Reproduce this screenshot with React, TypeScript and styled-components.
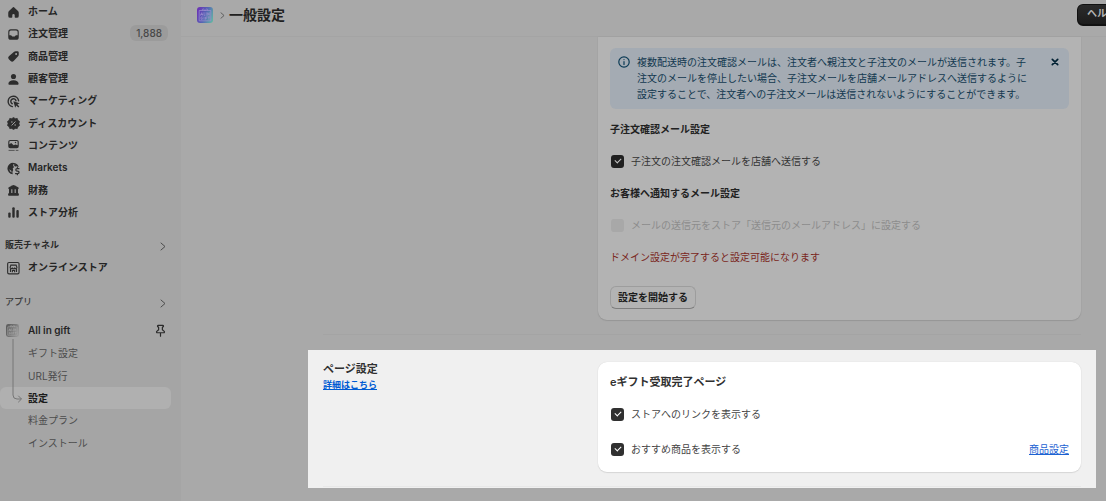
import React from "react";
import styled, { createGlobalStyle, css } from "styled-components";

const GlobalStyle = createGlobalStyle`
  *, *::before, *::after { box-sizing: border-box; }
  body {
    margin: 0;
    background: #a9a9a9;
    color: #212121;
    font-family: Inter, "Noto Sans CJK JP", sans-serif;
    font-size: 10px;
    line-height: 16px;
    overflow-x: clip;
  }
  h1, h2, h3, p, ul { margin: 0; padding: 0; }
  ul { list-style: none; }
  button { font: inherit; cursor: pointer; }
`;

const Shell = styled.div`
  display: flex;
  min-height: 100vh;
`;

/* ---------- Sidebar ---------- */

const Sidebar = styled.nav`
  flex: 0 0 181px;
  background: #a5a5a5;
`;

const NavList = styled.ul<{ $height: number }>`
  position: relative;
  display: grid;
  grid-auto-rows: 1fr;
  height: ${(p) => p.$height}px;
`;

const NavLink = styled.a<{ $sub?: boolean; $active?: boolean }>`
  display: flex;
  align-items: center;
  gap: 7px;
  height: 100%;
  margin-right: 10px;
  padding: 0 3px 0 ${(p) => (p.$sub ? 28 : 6)}px;
  border-radius: 6px;
  color: #252525;
  font-weight: 600;
  text-decoration: none;
  white-space: nowrap;
  ${(p) =>
    p.$sub &&
    css`
      color: #4c4c4c;
      font-weight: 400;
    `}
  ${(p) =>
    p.$active &&
    css`
      background: #b0b0b0;
      color: #1b1b1b;
      font-weight: 700;
    `}
`;

const NavIcon = styled.svg`
  flex: none;
  width: 15px;
  height: 15px;
  margin-top: 2px;
`;

const AppIcon = styled.span`
  display: flex;
  width: 15px;
`;

const Count = styled.span`
  margin-left: auto;
  padding: 0 6px;
  border-radius: 6px;
  background: #9b9b9b;
  color: #484848;
  font-weight: 500;
`;

const NavHeading = styled.button<{ $strong?: boolean }>`
  display: flex;
  align-items: center;
  justify-content: space-between;
  width: 100%;
  height: 22px;
  margin-top: ${(p) => (p.$strong ? 11 : 13)}px;
  padding: 0 15px 0 5px;
  border: 0;
  background: none;
  color: ${(p) => (p.$strong ? "#2a2a2a" : "#3c3c3c")};
  font-size: 9px;
  font-weight: ${(p) => (p.$strong ? 600 : 500)};
`;

const HeadingChevron = styled.span`
  display: flex;
  padding-top: 2px;
`;

const AppRow = styled.div`
  height: 22px;
  margin: 6px 0 1px;
`;

const PinSlot = styled.span`
  display: flex;
  margin-left: auto;
`;

const Connector = styled.svg`
  position: absolute;
  top: -3px;
  left: 10px;
  pointer-events: none;
`;

/* ---------- Header ---------- */

const Main = styled.main`
  flex: 1;
  min-width: 0;
`;

const TopBar = styled.header`
  display: flex;
  align-items: center;
  height: 37px;
  padding: 0 0 7px 16px;
  border-bottom: 1px solid #a4a4a4;
`;

const BarChevron = styled.span`
  display: flex;
  margin: 2px 0 0 7px;
`;

const Title = styled.h1`
  margin-left: 4px;
  color: #202020;
  font-size: 14px;
  line-height: 20px;
  font-weight: 600;
`;

const HelpButton = styled.button`
  height: 22px;
  margin: 0 -10px 0 auto;
  padding: 0 8px 4px 9px;
  border: 1px solid #111;
  border-bottom-width: 2px;
  border-radius: 6px;
  background: linear-gradient(#2b2b2b, #1c1c1c);
  color: #b4b4b4;
  font-weight: 600;
  white-space: nowrap;
`;

/* ---------- Settings ---------- */

const Content = styled.div`
  padding: 0 10px 12px 127px;
`;

const Section = styled.section<{ $lit?: boolean }>`
  display: grid;
  grid-template-columns: 275px minmax(0, 1fr);
  padding: 0 15px;
  ${(p) =>
    p.$lit &&
    css`
      margin-top: 15px;
      padding-top: 12px;
      background: #f0f0f0;
    `}
`;

const Divider = styled.hr<{ $inner?: boolean }>`
  height: 1px;
  margin: ${(p) => (p.$inner ? "14px 0 1px" : "14px 15px 0")};
  border: 0;
  background: ${(p) => (p.$inner ? "#e8e8e8" : "#a4a4a4")};
  grid-column: 1 / -1;
`;

const Card = styled.div<{ $lit?: boolean }>`
  display: flex;
  flex-direction: column;
  align-items: stretch;
  gap: 16px;
  ${(p) =>
    p.$lit
      ? css`
          padding: 12px 12px 15px;
          border-radius: 9px;
          background: #fff;
          box-shadow: 0 1px 1px #d6d6d6, 0 0 1px #ccc;
        `
      : css`
          padding: 11px 12px;
          border-radius: 0 0 9px 9px;
          background: #b3b3b3;
          box-shadow: 0 1px 1px #969696, 0 0 1px #929292;
        `}
`;

const Banner = styled.div`
  display: flex;
  align-items: flex-start;
  margin-bottom: -4px;
  padding: 6px 9px 7px 8px;
  border-radius: 6px;
  background: #a4abb3;
  color: #12384f;
`;

const InfoIcon = styled.svg`
  flex: none;
  width: 12px;
  height: 12px;
  margin-top: 2px;
`;

const BannerText = styled.p`
  flex: 1;
  margin-left: 7px;
`;

const CloseButton = styled.button`
  display: flex;
  padding: 3px 0;
  border: 0;
  background: none;
  color: #002133;
`;

const CardHeading = styled.h3<{ $large?: boolean }>`
  color: ${(p) => (p.$large ? "#303030" : "#212121")};
  font-size: ${(p) => (p.$large ? 11 : 10)}px;
  line-height: 16px;
  font-weight: 600;
`;

const SectionTitle = styled.h2`
  color: #303030;
  font-size: 11px;
  line-height: 15px;
  font-weight: 600;
`;

const TextLink = styled.a<{ $strong?: boolean }>`
  color: #1c62d2;
  text-decoration: underline;
  ${(p) =>
    p.$strong &&
    css`
      display: block;
      width: fit-content;
      color: #005bd3;
      font-size: 9px;
      line-height: 15px;
      font-weight: 600;
    `}
`;

const Options = styled.div`
  display: flex;
  flex-direction: column;
  gap: 19px;
`;

const OptionRow = styled.div`
  display: flex;
  align-items: center;
  justify-content: space-between;
  height: 16px;
`;

const Option = styled.label<{ $lit?: boolean; $off?: boolean }>`
  display: flex;
  align-items: center;
  gap: 7px;
  padding-left: 1px;
  color: ${(p) => (p.$off ? "#8c8c8c" : p.$lit ? "#454545" : "#333")};
`;

const Tick = styled.input<{ $lit?: boolean }>`
  appearance: none;
  display: grid;
  place-items: center;
  width: 13px;
  height: 13px;
  margin: 0;
  border-radius: 3px;
  background: ${(p) => (p.$lit ? "#303030" : "#202020")};
  &::after {
    content: "";
    width: 6px;
    height: 4px;
    margin-bottom: 2px;
    border: solid ${(p) => (p.$lit ? "#fff" : "#c4c4c4")};
    border-width: 0 0 1px 1px;
    transform: rotate(-45deg);
  }
  &:disabled { background: #a8a8a8; }
  &:disabled::after { display: none; }
`;

const Warning = styled.p`
  color: #7a2620;
`;

const StartButton = styled.button`
  align-self: flex-start;
  height: 23px;
  margin-top: 5px;
  padding: 0 7px 1px;
  border: 1px solid #9d9d9d;
  border-bottom-color: #7e7e7e;
  border-radius: 6px;
  background: #b3b3b3;
  color: #1c1c1c;
  font-weight: 600;
`;

/* ---------- Icons ---------- */

const icons = {
  home: (
    <path d="M8.6 3.5a2 2 0 0 1 2.8 0l4.6 4.4c.6.6 1 1.4 1 2.300v4.300a2.500 2.500 0 0 1-2.500 2.500h-2a.9.9 0 0 1-.9-.9v-2.600a1.600 1.600 0 0 0-3.200 0v2.600a.9.9 0 0 1-.9.9h-2A2.500 2.500 0 0 1 3 14.500v-4.300c0-.9.4-1.700 1-2.300z" />
  ),
  orders: (
    <path
      fillRule="evenodd"
      d="M6.500 3h7A3.500 3.500 0 0 1 17 6.500v7a3.500 3.500 0 0 1-3.500 3.500h-7A3.500 3.500 0 0 1 3 13.500v-7A3.500 3.500 0 0 1 6.500 3zm0 1.500a2 2 0 0 0-2 2V11h1.800c.7 0 1.200.4 1.500.9.300.6.800.9 1.500.9h1.400c.7 0 1.200-.3 1.500-.9.300-.5.800-.9 1.500-.9h1.800V6.500a2 2 0 0 0-2-2z"
    />
  ),
  products: (
    <path
      fillRule="evenodd"
      d="M10.800 3.800c.6-.5 1.300-.8 2.100-.8h2.400A1.700 1.700 0 0 1 17 4.700v3c0 .8-.3 1.500-.9 2.100l-5.900 6.300a2.800 2.800 0 0 1-4 0l-2.400-2.400a2.800 2.800 0 0 1 0-4zM13.500 8a1.300 1.300 0 1 0 0-2.600 1.300 1.300 0 0 0 0 2.600z"
    />
  ),
  person: (
    <>
      <circle cx="10" cy="6" r="3.400" />
      <path d="M3.200 15.500c0-2.700 3-4.500 6.800-4.500s6.800 1.800 6.800 4.500c0 .8-.6 1.500-1.500 1.500H4.700c-.9 0-1.500-.7-1.500-1.500z" />
    </>
  ),
  marketing: (
    <>
      <path d="M8.500 16.800A7 7 0 1 1 16.800 9" fill="none" stroke="#2d2d2d" strokeWidth="1.900" strokeLinecap="round" />
      <path d="M8.300 13A3.500 3.500 0 1 1 13.300 9" fill="none" stroke="#2d2d2d" strokeWidth="1.900" strokeLinecap="round" />
      <path d="M9.800 9.800l8.400 2.500-3 1.700 2.600 2.700-1.400 1.400-2.700-2.700-1.400 2.900z" />
    </>
  ),
  discount: (
    <>
      <path d="M10 2l2.300 1.500 2.700-.3.800 2.500L18 7.300 17.200 10l.8 2.700-2.200 1.600-.8 2.500-2.700-.3L10 18l-2.300-1.500-2.700.3-.8-2.500L2 12.700 2.800 10 2 7.300l2.200-1.600L5 3.200l2.700.3z" stroke="#2d2d2d" strokeLinejoin="round" />
      <path d="M7.800 12.200l4.400-4.400" stroke="#a5a5a5" strokeWidth="1.300" strokeLinecap="round" />
      <circle cx="7.800" cy="8" r="1" fill="#a5a5a5" />
      <circle cx="12.200" cy="12" r="1" fill="#a5a5a5" />
    </>
  ),
  content: (
    <>
      <path
        fillRule="evenodd"
        d="M5.500 2.500h9A2.500 2.500 0 0 1 17 5v6a2.500 2.500 0 0 1-2.500 2.500h-9A2.500 2.500 0 0 1 3 11V5a2.500 2.500 0 0 1 2.500-2.500zM4.500 8.200L7 6.800l3.200 2.700 2.300-1 3 1V5.200a1.200 1.200 0 0 0-1.200-1.200H5.700a1.200 1.200 0 0 0-1.200 1.200z"
      />
      <path d="M4 16.500h7M13.500 16.500H16" stroke="#2d2d2d" strokeWidth="1.300" strokeLinecap="round" opacity="0.700" />
      <circle cx="12.700" cy="6" r="1" />
    </>
  ),
  markets: (
    <>
      <path
        fillRule="evenodd"
        d="M10 2.500c3.200 0 6 2 7 5l-1.500.5c-.9-2.300-3-3.900-5.500-3.900l-.5 2.400 1.500 1.500-2 1.500.5 2.500-1 2.500.5 3.200A7.500 7.500 0 0 1 10 2.500zM4.200 11l1.700 3.300 1.600 1.100-.5-2.400z"
      />
      <path d="M11 3.300l4.300 2-1.800 2.200-2.500-1z" />
      <path d="M17.300 10.200h-2.600a1.600 1.600 0 0 0 0 3.200h1a1.700 1.700 0 0 1 0 3.400h-3M15.200 8.700v1.500M15.200 16.800v1.500" fill="none" stroke="#2d2d2d" strokeWidth="1.600" strokeLinecap="round" />
    </>
  ),
  finance: (
    <>
      <path d="M9.100 2.900a2 2 0 0 1 1.800 0l5.300 2.700c1.300.7.800 2.700-.7 2.700h-11C3 8.300 2.500 6.300 3.800 5.600z" />
      <path d="M4 8h3v6H4zM8.500 8h3v6h-3zM13 8h3v6h-3zM4.500 13.300h11A1.700 1.700 0 0 1 17.200 15v.6c0 .8-.6 1.400-1.400 1.400H4.200c-.8 0-1.400-.6-1.400-1.400V15a1.700 1.700 0 0 1 1.700-1.700z" />
    </>
  ),
  analytics: (
    <>
      <rect x="3" y="10" width="3.200" height="7" rx="1.400" />
      <rect x="8.400" y="3" width="3.200" height="14" rx="1.400" />
      <rect x="13.800" y="6.500" width="3.200" height="10.500" rx="1.400" />
    </>
  ),
  store: (
    <g fill="none" stroke="#2d2d2d" strokeWidth="1.500">
      <rect x="2.200" y="2" width="15.200" height="15.200" rx="1.800" />
      <path d="M6.500 5.500h7l1 3a1.500 1.500 0 0 1-3 .3 1.500 1.500 0 0 1-3 0 1.500 1.500 0 0 1-3-.3zM6 10.500v4.200M14 10.500v4.200M8.500 15v-2.500h3V15" />
    </g>
  ),
};

const Icon = ({ name }: { name: keyof typeof icons }) => (
  <NavIcon viewBox="0 0 20 20" fill="#2d2d2d" aria-hidden="true">
    {icons[name]}
  </NavIcon>
);

const GiftMark = ({ size, from, mid, to, line }: { size: number; from: string; mid: string; to: string; line: string }) => {
  const id = `gift-${size}`;
  return (
    <svg width={size} height={size} viewBox="0 0 16 16" aria-hidden="true">
      <defs>
        <linearGradient id={id} x1="0" y1="0.300" x2="1" y2="0.700">
          <stop offset="0" stopColor={from} />
          <stop offset="0.500" stopColor={mid} />
          <stop offset="1" stopColor={to} />
        </linearGradient>
      </defs>
      <rect width="16" height="16" rx="3" fill={`url(#${id})`} />
      <g fill="none" stroke={line} strokeWidth="0.700" strokeLinecap="round" strokeLinejoin="round">
        <path d="M5.500 3.500H2.200v10.300h11.600V3.500h-3.300M8 3.500C6.500 1 4.800 1.800 5.600 3.500h4.800C11.200 1.800 9.500 1 8 3.500" />
        <path d="M3.700 8.300l1-2.600 1 2.600M4 7.500h1.400M7 5.700v2.600h.8M9.200 5.700v2.600M10.700 8.300V5.700l1.500 2.600V5.700" />
        <path d="M5.300 10H4v2.300h1.300v-1M7 10v2.300M9.900 10H8.600v2.300M8.600 11.200h1M11 10h1.800M11.900 10v2.300" />
      </g>
    </svg>
  );
};

const Chevron = ({ small }: { small?: boolean }) => (
  <svg width={small ? 5 : 6} height={small ? 7 : 9} viewBox="0 0 6 9" fill="none" stroke="#4c4c4c" strokeWidth="1" strokeLinecap="round" strokeLinejoin="round" aria-hidden="true">
    <path d="M1 1l4 3.500L1 8" />
  </svg>
);

/* ---------- Page ---------- */

const mainItems: { label: string; icon: keyof typeof icons; count?: string }[] = [
  { label: "ホーム", icon: "home" },
  { label: "注文管理", icon: "orders", count: "1,888" },
  { label: "商品管理", icon: "products" },
  { label: "顧客管理", icon: "person" },
  { label: "マーケティング", icon: "marketing" },
  { label: "ディスカウント", icon: "discount" },
  { label: "コンテンツ", icon: "content" },
  { label: "Markets", icon: "markets" },
  { label: "財務", icon: "finance" },
  { label: "ストア分析", icon: "analytics" },
];

const appItems = ["ギフト設定", "URL発行", "設定", "料金プラン", "インストール"];

const CheckOption = ({ label, lit, disabled }: { label: string; lit?: boolean; disabled?: boolean }) => (
  <Option $lit={lit} $off={disabled}>
    <Tick type="checkbox" $lit={lit} defaultChecked={!disabled} disabled={disabled} />
    {label}
  </Option>
);

export default function App() {
  return (
    <>
      <GlobalStyle />
      <Shell>
        <Sidebar>
          <NavList $height={223}>
            {mainItems.map((item) => (
              <li key={item.label}>
                <NavLink href="#">
                  <Icon name={item.icon} />
                  {item.label}
                  {item.count && <Count>{item.count}</Count>}
                </NavLink>
              </li>
            ))}
          </NavList>
          <NavHeading $strong>
            販売チャネル
            <HeadingChevron><Chevron /></HeadingChevron>
          </NavHeading>
          <NavList $height={22}>
            <li>
              <NavLink href="#">
                <Icon name="store" />
                オンラインストア
              </NavLink>
            </li>
          </NavList>
          <NavHeading>
            アプリ
            <HeadingChevron><Chevron /></HeadingChevron>
          </NavHeading>
          <AppRow>
            <NavLink href="#">
              <AppIcon>
                <GiftMark size={13} from="#5c5c5c" mid="#777" to="#999" line="#aaa" />
              </AppIcon>
              All in gift
              <PinSlot>
                <svg width="15" height="15" viewBox="0 0 20 20" fill="none" stroke="#2a2a2a" strokeWidth="1.600" strokeLinecap="round" strokeLinejoin="round" aria-hidden="true">
                  <path d="M6.800 3.200h6.400c.8 0 1 .9.500 1.500L12.500 6v3l2.500 2.200c.6.700.2 1.800-.7 1.800H5.700c-.9 0-1.300-1.100-.7-1.800L7.500 9V6L6.300 4.700c-.5-.6-.3-1.500.5-1.500zM10 13v4.500" />
                </svg>
              </PinSlot>
            </NavLink>
          </AppRow>
          <NavList $height={112}>
            {appItems.map((label) => (
              <li key={label}>
                <NavLink href="#" $sub $active={label === "設定"}>{label}</NavLink>
              </li>
            ))}
            <Connector width="14" height="64" viewBox="0 0 14 64" fill="none" stroke="#767676" aria-hidden="true">
              <path d="M3 0v56q0 4 4 4h4M8.500 57l3 3-3 3" strokeLinecap="round" strokeLinejoin="round" />
            </Connector>
          </NavList>
        </Sidebar>

        <Main>
          <TopBar>
            <GiftMark size={16} from="#6a35b5" mid="#5565b4" to="#5fb0a4" line="#9d8fd0" />
            <BarChevron><Chevron small /></BarChevron>
            <Title>一般設定</Title>
            <HelpButton>ヘル</HelpButton>
          </TopBar>

          <Content>
            <Section>
              <div />
              <Card>
                <Banner>
                  <InfoIcon viewBox="0 0 12 12" fill="none" stroke="#0a3a55" strokeWidth="1.200" strokeLinecap="round" aria-hidden="true">
                    <circle cx="6" cy="6" r="5.200" />
                    <path d="M6 5.700v2.800M6 3.500v.1" />
                  </InfoIcon>
                  <BannerText>
                    複数配送時の注文確認メールは、注文者へ親注文と子注文のメールが送信されます。子
                    <br />
                    注文のメールを停止したい場合、子注文メールを店舗メールアドレスへ送信するように
                    <br />
                    設定することで、注文者への子注文メールは送信されないようにすることができます。
                  </BannerText>
                  <CloseButton aria-label="閉じる">
                    <svg width="10" height="10" viewBox="0 0 10 10" stroke="currentColor" strokeWidth="1.700" strokeLinecap="round" aria-hidden="true">
                      <path d="M2.300 2.300l5.400 5.400M7.700 2.300L2.300 7.700" />
                    </svg>
                  </CloseButton>
                </Banner>
                <CardHeading>子注文確認メール設定</CardHeading>
                <OptionRow>
                  <CheckOption label="子注文の注文確認メールを店舗へ送信する" />
                </OptionRow>
                <CardHeading>お客様へ通知するメール設定</CardHeading>
                <OptionRow>
                  <CheckOption label="メールの送信元をストア「送信元のメールアドレス」に設定する" disabled />
                </OptionRow>
                <Warning>ドメイン設定が完了すると設定可能になります</Warning>
                <StartButton>設定を開始する</StartButton>
              </Card>
            </Section>
            <Divider />
            <Section $lit>
              <div>
                <SectionTitle>ページ設定</SectionTitle>
                <TextLink href="#" $strong>詳細はこちら</TextLink>
              </div>
              <Card $lit>
                <CardHeading $large>eギフト受取完了ページ</CardHeading>
                <Options>
                  <OptionRow>
                    <CheckOption label="ストアへのリンクを表示する" lit />
                  </OptionRow>
                  <OptionRow>
                    <CheckOption label="おすすめ商品を表示する" lit />
                    <TextLink href="#">商品設定</TextLink>
                  </OptionRow>
                </Options>
              </Card>
              <Divider $inner />
            </Section>
          </Content>
        </Main>
      </Shell>
    </>
  );
}
